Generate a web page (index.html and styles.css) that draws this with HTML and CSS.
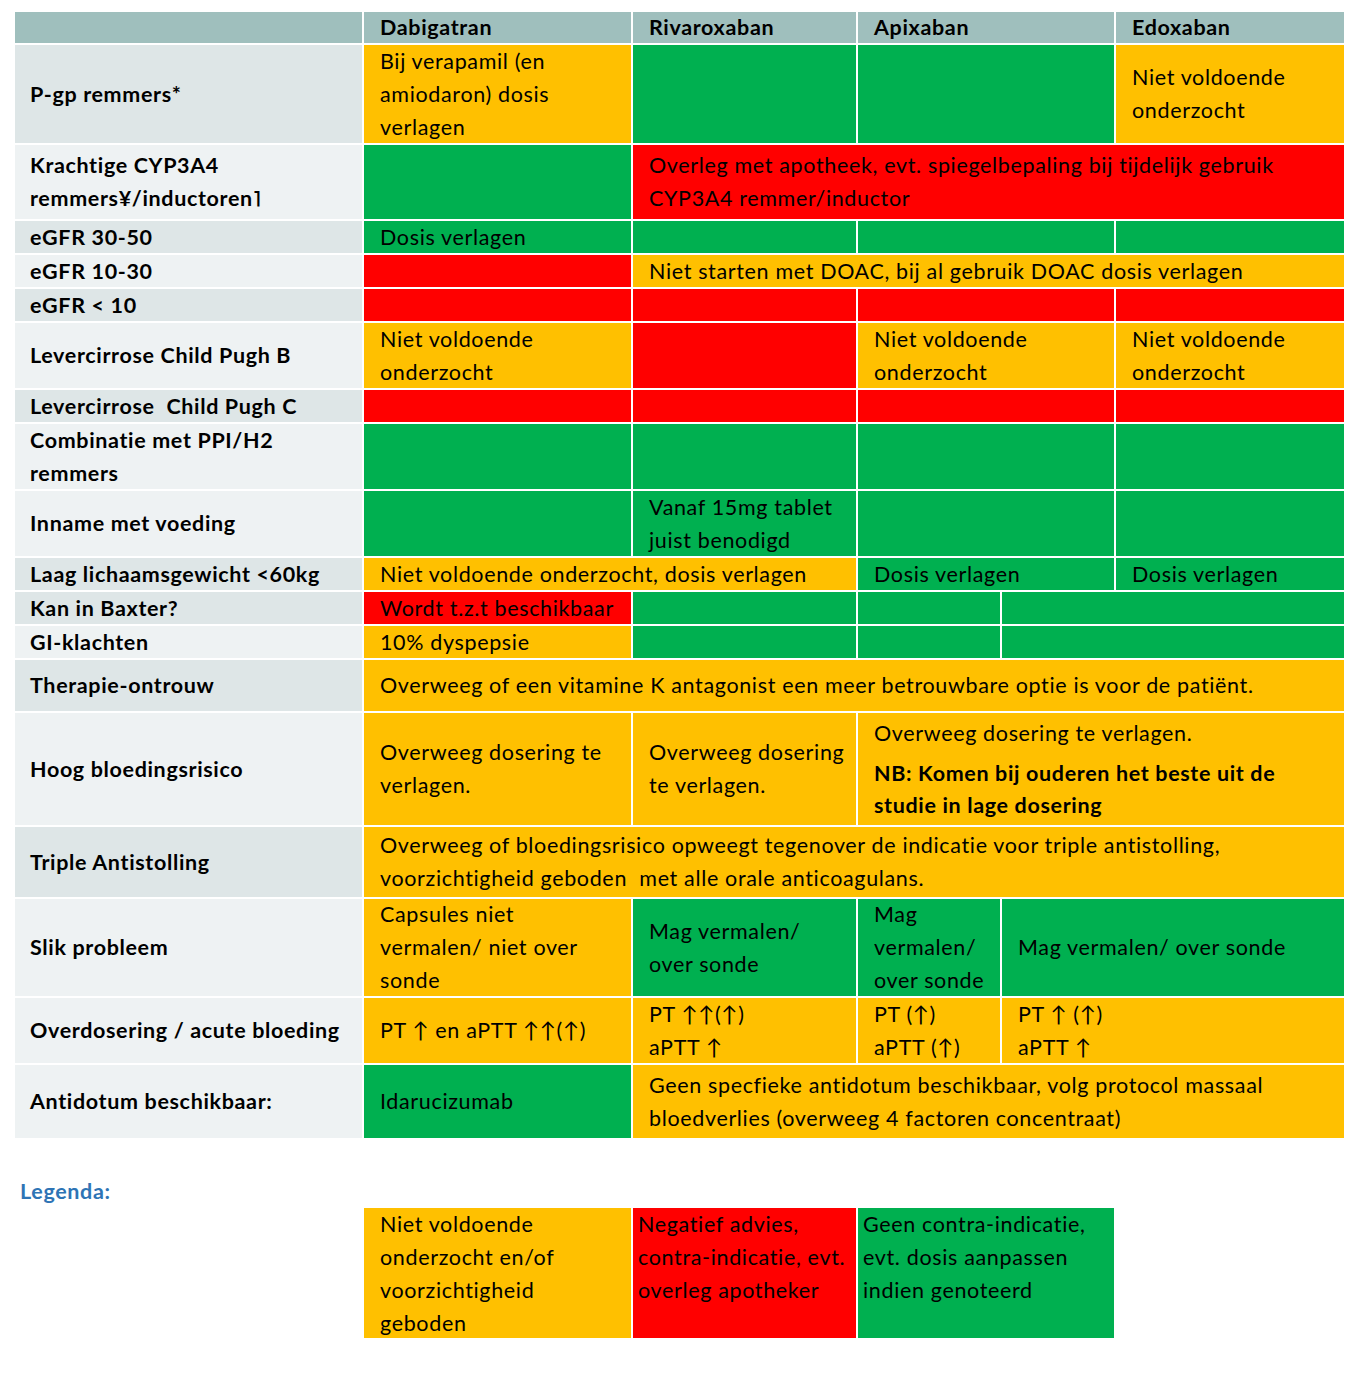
FILE: index.html
```html
<!DOCTYPE html>
<html lang="nl">
<head>
<meta charset="utf-8">
<title>DOAC overzicht</title>
<link rel="stylesheet" href="styles.css">
</head>
<body>
<div class="page">
  <div class="tbl">
    <!-- header -->
    <div class="hdr"></div>
    <div class="hdr">Dabigatran</div>
    <div class="hdr">Rivaroxaban</div>
    <div class="hdr s2">Apixaban</div>
    <div class="hdr">Edoxaban</div>

    <div class="lab dk">P-gp remmers*</div>
    <div class="o">Bij verapamil (en amiodaron) dosis verlagen</div>
    <div class="g"></div>
    <div class="g s2"></div>
    <div class="o">Niet voldoende onderzocht</div>

    <div class="lab lt">Krachtige CYP3A4 remmers¥/inductoren˥</div>
    <div class="g"></div>
    <div class="r s4">Overleg met apotheek, evt. spiegelbepaling bij tijdelijk gebruik CYP3A4 remmer/inductor</div>

    <div class="lab dk">eGFR 30-50</div>
    <div class="g">Dosis verlagen</div>
    <div class="g"></div>
    <div class="g s2"></div>
    <div class="g"></div>

    <div class="lab lt">eGFR 10-30</div>
    <div class="r"></div>
    <div class="o s4">Niet starten met DOAC, bij al gebruik DOAC dosis verlagen</div>

    <div class="lab dk">eGFR &lt; 10</div>
    <div class="r"></div>
    <div class="r"></div>
    <div class="r s2"></div>
    <div class="r"></div>

    <div class="lab lt">Levercirrose Child Pugh B</div>
    <div class="o">Niet voldoende onderzocht</div>
    <div class="r"></div>
    <div class="o s2">Niet voldoende onderzocht</div>
    <div class="o">Niet voldoende onderzocht</div>

    <div class="lab dk">Levercirrose&nbsp; Child Pugh C</div>
    <div class="r"></div>
    <div class="r"></div>
    <div class="r s2"></div>
    <div class="r"></div>

    <div class="lab lt">Combinatie met PPI/H2 remmers</div>
    <div class="g"></div>
    <div class="g"></div>
    <div class="g s2"></div>
    <div class="g"></div>

    <div class="lab lt">Inname met voeding</div>
    <div class="g"></div>
    <div class="g">Vanaf 15mg tablet juist benodigd</div>
    <div class="g s2"></div>
    <div class="g"></div>

    <div class="lab dk">Laag lichaamsgewicht &lt;60kg</div>
    <div class="o s2">Niet voldoende onderzocht, dosis verlagen</div>
    <div class="g s2">Dosis verlagen</div>
    <div class="g">Dosis verlagen</div>

    <div class="lab dk">Kan in Baxter?</div>
    <div class="r">Wordt t.z.t beschikbaar</div>
    <div class="g"></div>
    <div class="g"></div>
    <div class="g s2"></div>

    <div class="lab lt">GI-klachten</div>
    <div class="o">10% dyspepsie</div>
    <div class="g"></div>
    <div class="g"></div>
    <div class="g s2"></div>

    <div class="lab dk">Therapie-ontrouw</div>
    <div class="o s5">Overweeg of een vitamine K antagonist een meer betrouwbare optie is voor de patiënt.</div>

    <div class="lab lt">Hoog bloedingsrisico</div>
    <div class="o">Overweeg dosering te verlagen.</div>
    <div class="o narrow-pad">Overweeg dosering te verlagen.</div>
    <div class="o s3 stack">
      <p>Overweeg dosering te verlagen.</p>
      <p class="b">NB: Komen bij ouderen het beste uit de studie in lage dosering</p>
    </div>

    <div class="lab dk">Triple Antistolling</div>
    <div class="o s5">Overweeg of bloedingsrisico opweegt tegenover de indicatie voor triple antistolling, voorzichtigheid geboden&nbsp; met alle orale anticoagulans.</div>

    <div class="lab lt">Slik probleem</div>
    <div class="o">Capsules niet vermalen/ niet over sonde</div>
    <div class="g">Mag vermalen/ over sonde</div>
    <div class="g">Mag vermalen/ over sonde</div>
    <div class="g s2">Mag vermalen/ over sonde</div>

    <div class="lab lt">Overdosering / acute bloeding</div>
    <div class="o">PT ↑ en aPTT ↑↑(↑)</div>
    <div class="o">PT ↑↑(↑)<br>aPTT ↑</div>
    <div class="o">PT (↑)<br>aPTT (↑)</div>
    <div class="o s2">PT ↑ (↑)<br>aPTT ↑</div>

    <div class="lab lt">Antidotum beschikbaar:</div>
    <div class="g">Idarucizumab</div>
    <div class="o s4">Geen specfieke antidotum beschikbaar, volg protocol massaal bloedverlies (overweeg 4 factoren concentraat)</div>
  </div>

  <div class="legend-title">Legenda:</div>
  <div class="legend">
    <div class="lg o">Niet voldoende onderzocht en/of voorzichtigheid geboden</div>
    <div class="lg r tight">Negatief advies, contra-indicatie, evt. overleg apotheker</div>
    <div class="lg g tight">Geen contra-indicatie, evt. dosis aanpassen indien genoteerd</div>
  </div>
</div>
</body>
</html>
```

FILE: styles.css
```css
html, body {
  margin: 0;
  padding: 0;
  background: #ffffff;
}

body {
  font-family: "Lato", "Open Sans", "Liberation Sans", sans-serif;
  font-size: 21.5px;
  letter-spacing: 0.65px;
  line-height: 33px;
  color: #000000;
}

.page {
  padding: 12px 0 0 15px;
}

.tbl {
  display: grid;
  grid-template-columns: 347px 267px 223px 142px 112px 228px;
  grid-template-rows: 31px 98px 74px 32px 32px 32px 65px 32px 65px 65px 32px 32px 32px 51px 112px 70px 97px 65px 73px;
  gap: 2px;
  width: 1329px;
}

.tbl > div {
  display: flex;
  flex-direction: column;
  justify-content: center;
  padding: 0 14px 0 16px;
  box-sizing: border-box;
}

.tbl > .narrow-pad {
  padding-right: 2px;
}

.hdr {
  background: #9fbfbd;
  font-weight: 700;
}

.lab {
  font-weight: 700;
  padding-left: 15px !important;
  padding-right: 8px !important;
}

.dk { background: #dee6e7; }
.lt { background: #eef2f3; }

.o { background: #ffc000; }
.g { background: #00b050; }
.r { background: #ff0000; }

.s2 { grid-column: span 2; }
.s3 { grid-column: span 3; }
.s4 { grid-column: span 4; }
.s5 { grid-column: span 5; }

.stack p {
  margin: 0;
}

.stack p + p {
  margin-top: 7px;
  line-height: 32px;
}

.b { font-weight: 700; }

.legend-title {
  margin-top: 37px;
  padding-left: 5px;
  color: #2e74b5;
  font-weight: 700;
}

.legend {
  display: grid;
  grid-template-columns: 267px 223px 256px;
  gap: 2px;
  margin-left: 349px;
  margin-top: 0;
}

.lg {
  height: 130px;
  padding: 0 12px 0 16px;
  box-sizing: border-box;
}

.lg.tight {
  padding-left: 5px;
  padding-right: 0;
}
```
